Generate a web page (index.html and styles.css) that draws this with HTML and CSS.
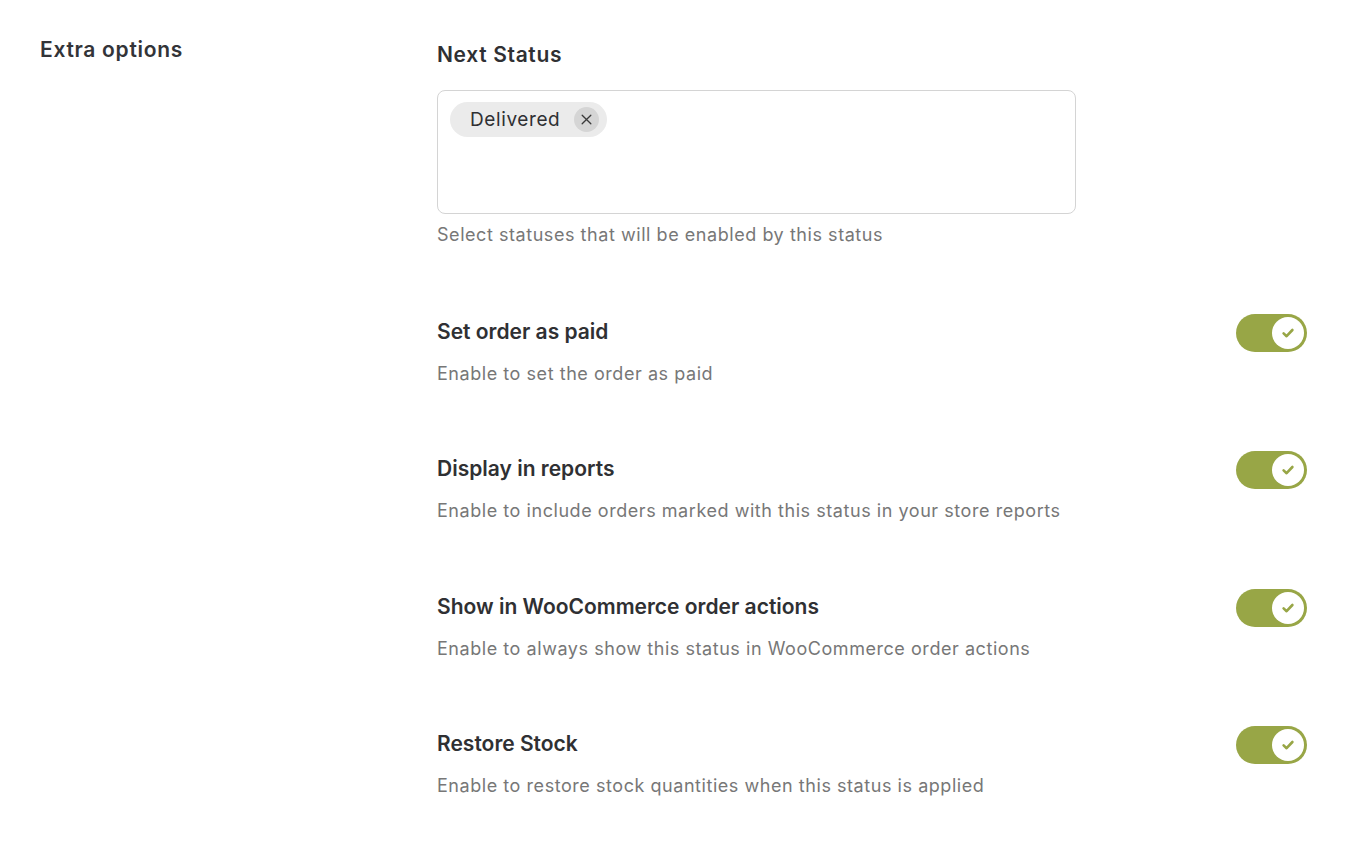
FILE: index.html
```html
<!DOCTYPE html>
<html>
<head>
<meta charset="utf-8">
<link rel="stylesheet" href="styles.css">
</head>
<body>
<div class="page">
  <div class="side"><h2 class="side-title">Extra options</h2></div>
  <div class="main">
    <section class="field">
      <h3 class="title title-lg">Next Status</h3>
      <div class="select-box">
        <span class="chip">Delivered<span class="chip-x"><svg width="13" height="13" viewBox="0 0 12 12"><path d="M2 2L10 10M10 2L2 10" stroke="#3a3a3a" stroke-width="1.2" stroke-linecap="round"/></svg></span></span>
      </div>
      <p class="desc">Select statuses that will be enabled by this status</p>
    </section>
    <section class="row">
      <div class="row-text"><h3 class="title">Set order as paid</h3><p class="desc">Enable to set the order as paid</p></div>
      <span class="toggle"><span class="knob"><svg width="16" height="16" viewBox="0 0 16 16"><path d="M3.6 8.4L6.6 11.2L12.4 5" fill="none" stroke="#98a646" stroke-width="2.6" stroke-linecap="round" stroke-linejoin="round"/></svg></span></span>
    </section>
    <section class="row">
      <div class="row-text"><h3 class="title">Display in reports</h3><p class="desc">Enable to include orders marked with this status in your store reports</p></div>
      <span class="toggle"><span class="knob"><svg width="16" height="16" viewBox="0 0 16 16"><path d="M3.6 8.4L6.6 11.2L12.4 5" fill="none" stroke="#98a646" stroke-width="2.6" stroke-linecap="round" stroke-linejoin="round"/></svg></span></span>
    </section>
    <section class="row">
      <div class="row-text"><h3 class="title">Show in WooCommerce order actions</h3><p class="desc">Enable to always show this status in WooCommerce order actions</p></div>
      <span class="toggle"><span class="knob"><svg width="16" height="16" viewBox="0 0 16 16"><path d="M3.6 8.4L6.6 11.2L12.4 5" fill="none" stroke="#98a646" stroke-width="2.6" stroke-linecap="round" stroke-linejoin="round"/></svg></span></span>
    </section>
    <section class="row">
      <div class="row-text"><h3 class="title">Restore Stock</h3><p class="desc">Enable to restore stock quantities when this status is applied</p></div>
      <span class="toggle"><span class="knob"><svg width="16" height="16" viewBox="0 0 16 16"><path d="M3.6 8.4L6.6 11.2L12.4 5" fill="none" stroke="#98a646" stroke-width="2.6" stroke-linecap="round" stroke-linejoin="round"/></svg></span></span>
    </section>
  </div>
</div>
</body>
</html>
```
FILE: styles.css
```css
* { box-sizing: border-box; }
html, body { margin: 0; padding: 0; background: #fff; }
body { font-family: Inter, "Open Sans", "Liberation Sans", sans-serif; color: #2f3033; }
.page { display: flex; padding: 36px 61px 0 40px; }
.side { width: 397px; flex: none; }
.side-title { margin: 0; font-size: 21px; font-weight: 600; line-height: 28px; letter-spacing: 0.7px; color: #333438; }
.main { flex: 1; }
.title { margin: 0; font-size: 21px; font-weight: 600; line-height: 28px; color: #2f3033; }
.title-lg { letter-spacing: 0.65px; }
.field .title { margin-top: 5px; }
.select-box { margin-top: 21px; width: 639px; height: 124px; border: 1px solid #d4d4d4; border-radius: 8px; padding: 11px 12px; }
.chip { display: inline-flex; align-items: center; height: 35px; padding: 0 8px 0 20px; background: #ebebeb; border-radius: 18px; font-size: 19px; letter-spacing: 0.6px; color: #2f3033; }
.chip-x { display: inline-flex; align-items: center; justify-content: center; width: 25px; height: 25px; border-radius: 50%; background: #d5d5d5; margin-left: 14px; }
.desc { margin: 0; font-size: 18px; line-height: 26px; letter-spacing: 0.55px; color: #777; }
.field .desc { margin-top: 8px; }
.row { display: flex; justify-content: space-between; align-items: flex-start; }
.field + .row { margin-top: 69.5px; }
.row + .row { margin-top: 68.5px; }
.row-text .desc { margin-top: 15px; }
.toggle { width: 71px; height: 38px; border-radius: 19px; background: #98a646; display: flex; align-items: center; justify-content: flex-end; padding-right: 3px; margin-top: -4px; }
.knob { width: 32px; height: 32px; border-radius: 50%; background: #fff; display: flex; align-items: center; justify-content: center; }
```
